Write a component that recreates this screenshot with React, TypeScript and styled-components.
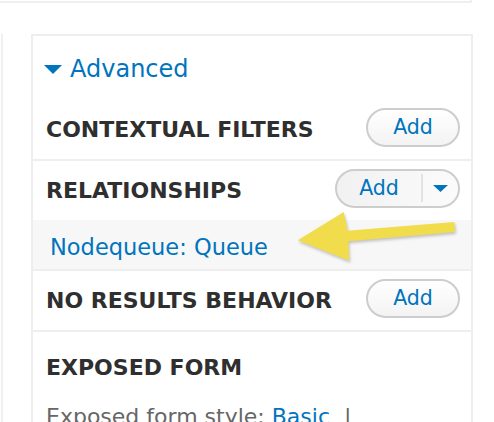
import React from 'react';
import styled, { createGlobalStyle } from 'styled-components';

const GlobalStyle = createGlobalStyle`
  html, body {
    margin: 0;
    padding: 0;
    background: #fff;
  }
  body {
    font-family: "DejaVu Sans", Verdana, sans-serif;
    color: #333;
  }
`;

const Page = styled.div`
  width: 494px;
  height: 422px;
  overflow: hidden;
`;

const TopBox = styled.div`
  width: 470px;
  height: 1px;
  border-bottom: 2px solid #efefef;
  border-right: 2px solid #efefef;
`;

const Columns = styled.div`
  display: flex;
  gap: 28px;
  margin-top: 31px;
`;

const Sidebar = styled.div`
  width: 1px;
  border-right: 2px solid #f0f0f0;
`;

const Panel = styled.div`
  width: 438px;
  border: 2px solid #eeeeee;
  border-bottom: none;
  height: 420px;
`;

const Summary = styled.div`
  display: flex;
  align-items: center;
  gap: 8px;
  height: 62px;
  padding: 2px 0 0 11px;
  color: #0074bd;
  font-size: 24px;
`;

const Section = styled.div<{ $last?: boolean }>`
  padding-top: ${({ $last }) => ($last ? '14px' : '8px')};
  padding-bottom: ${({ $last }) => ($last ? '0' : '13px')};
  border-bottom: ${({ $last }) => ($last ? 'none' : '2px solid #eeeeee')};
`;

const Header = styled.div`
  display: flex;
  align-items: center;
  justify-content: space-between;
  height: 38px;
  padding: 0 11px 0 13px;
`;

const Title = styled.h3`
  margin: 0;
  padding-top: 6px;
  font-size: 22px;
  font-weight: bold;
  color: #2f2f2f;
  line-height: 1.4;
`;

const AddButton = styled.span`
  display: inline-flex;
  align-items: center;
  justify-content: center;
  box-sizing: border-box;
  height: 39px;
  width: 94px;
  border: 2px solid #cdcdcd;
  border-radius: 20px;
  background: linear-gradient(to bottom, #ffffff, #f3f3f3);
  color: #0074bd;
  font-size: 20.5px;
`;

const SplitButton = styled(AddButton)`
  width: 125px;
  justify-content: flex-start;
  background: linear-gradient(to right, #f1f1f1, #fbfbfb);
`;

const SplitLabel = styled.span`
  width: 84px;
  text-align: center;
`;

const SplitToggle = styled.span`
  display: flex;
  align-items: center;
  justify-content: center;
  flex: 1;
  height: 28px;
  border-left: 2px solid #e2e2e2;
`;

const Item = styled.div`
  position: relative;
  display: flex;
  align-items: center;
  box-sizing: border-box;
  height: 49px;
  margin: 13px 0 -13px;
  padding: 4px 0 0 17px;
  background: #f7f7f7;
  color: #0074bd;
  font-size: 22.5px;
`;

const Arrow = styled.svg`
  position: absolute;
  left: 258px;
  top: -17px;
  overflow: visible;
  filter: drop-shadow(1px 2px 1.5px rgba(0, 0, 0, 0.22));
`;

const Detail = styled.p`
  margin: 18px 0 0;
  padding-left: 13px;
  font-size: 22px;
  line-height: 1.4;
  color: #666;
  white-space: nowrap;
`;

const Link = styled.span`
  color: #0074bd;
`;

const Caret = ({ w, h }: { w: number; h: number }) => (
  <svg width={w} height={h} viewBox={`0 0 ${w} ${h}`}>
    <polygon points={`0,0 ${w},0 ${w / 2},${h}`} fill="#0074bd" />
  </svg>
);

const App = () => {
  return (
    <Page>
      <GlobalStyle />
      <TopBox />
      <Columns>
        <Sidebar />
        <Panel>
          <Summary>
            <Caret w={18} h={9} />
            Advanced
          </Summary>
          <Section>
            <Header>
              <Title>CONTEXTUAL FILTERS</Title>
              <AddButton>Add</AddButton>
            </Header>
          </Section>
          <Section>
            <Header>
              <Title>RELATIONSHIPS</Title>
              <SplitButton>
                <SplitLabel>Add</SplitLabel>
                <SplitToggle>
                  <Caret w={15} h={7} />
                </SplitToggle>
              </SplitButton>
            </Header>
            <Item>
              Nodequeue: Queue
              <Arrow width="175" height="65" viewBox="0 0 175 65">
                <polygon
                  points="6.7,37.3 52.7,9 56.7,27.7 163.3,19 164,29 57.3,38.3 58.3,57.7"
                  fill="#f1dc4c"
                />
              </Arrow>
            </Item>
          </Section>
          <Section>
            <Header>
              <Title>NO RESULTS BEHAVIOR</Title>
              <AddButton>Add</AddButton>
            </Header>
          </Section>
          <Section $last>
            <Header>
              <Title>EXPOSED FORM</Title>
            </Header>
            <Detail>
              Exposed form style: <Link>Basic</Link> &nbsp;|
            </Detail>
          </Section>
        </Panel>
      </Columns>
    </Page>
  );
};

export default App;
